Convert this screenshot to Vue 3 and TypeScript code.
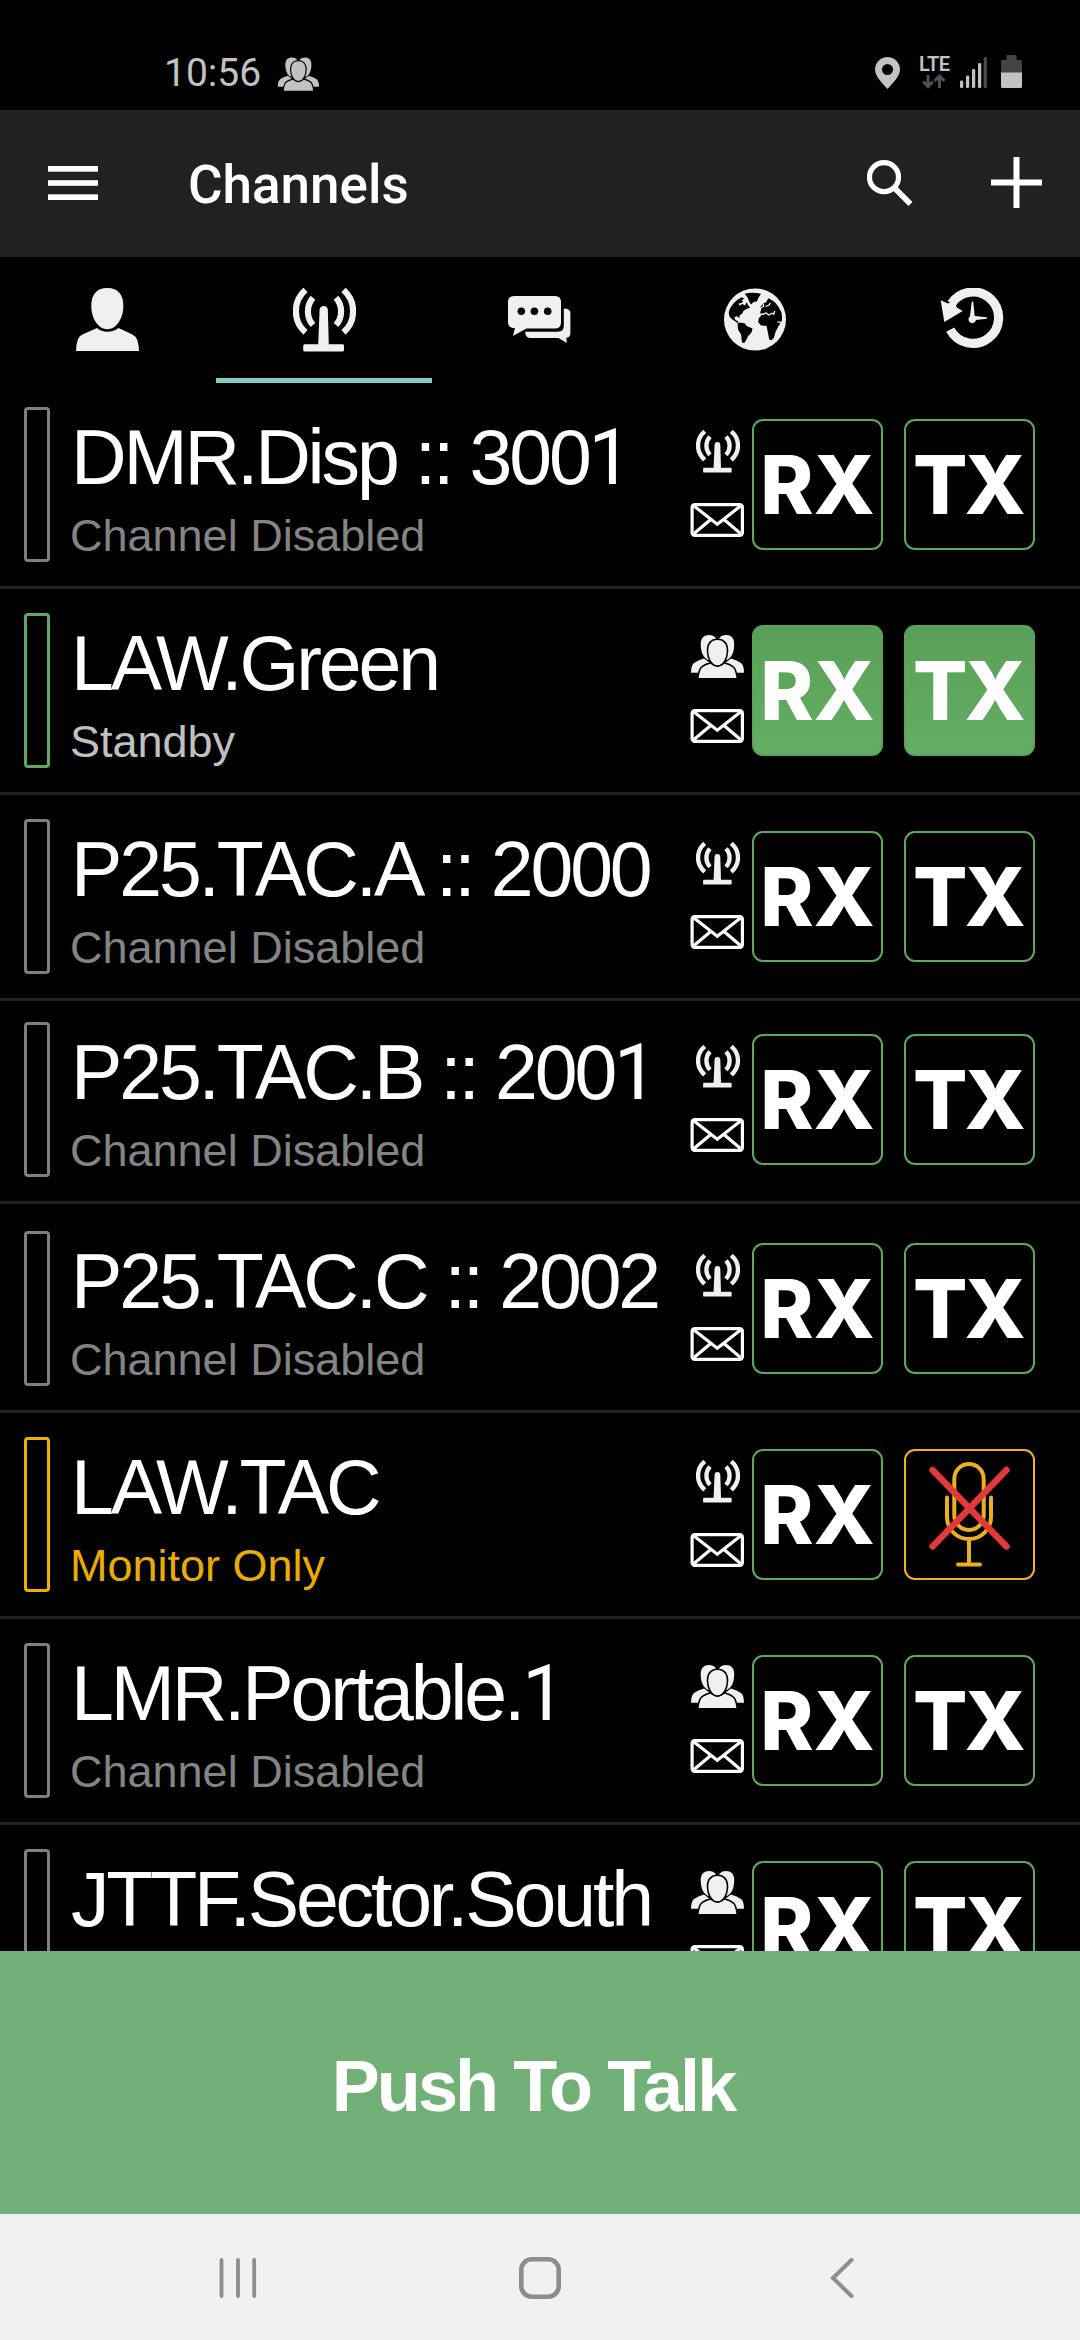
<script setup lang="ts">
type Kind = 'radio' | 'group'
type State = 'disabled' | 'standby' | 'monitor'

interface Channel {
  name: string
  status: string
  state: State
  kind: Kind
  shift?: 'tight' | 'loose'
}

const channels: Channel[] = [
  { name: 'DMR.Disp :: 3001', status: 'Channel Disabled', state: 'disabled', kind: 'radio' },
  { name: 'LAW.Green', status: 'Standby', state: 'standby', kind: 'group' },
  { name: 'P25.TAC.A :: 2000', status: 'Channel Disabled', state: 'disabled', kind: 'radio' },
  { name: 'P25.TAC.B :: 2001', status: 'Channel Disabled', state: 'disabled', kind: 'radio', shift: 'tight' },
  { name: 'P25.TAC.C :: 2002', status: 'Channel Disabled', state: 'disabled', kind: 'radio', shift: 'loose' },
  { name: 'LAW.TAC', status: 'Monitor Only', state: 'monitor', kind: 'radio' },
  { name: 'LMR.Portable.1', status: 'Channel Disabled', state: 'disabled', kind: 'group' },
  { name: 'JTTF.Sector.South', status: 'Channel Disabled', state: 'disabled', kind: 'group' },
]
</script>

<template>
  <div class="screen">
    <svg class="defs" width="0" height="0" aria-hidden="true">
      <symbol id="antenna" viewBox="0 0 63 64" preserveAspectRatio="none">
        <g fill="none" stroke="#f1eff0" stroke-width="6.2">
          <path d="M20 9.8A20.7 20.7 0 0 0 20 37" />
          <path d="M12.5 2A28.2 28.2 0 0 0 12.5 44.4" />
          <path d="M43 9.8A20.7 20.7 0 0 1 43 37" />
          <path d="M50.5 2A28.2 28.2 0 0 1 50.5 44.4" />
        </g>
        <path fill="#f1eff0" d="M26.6 21.5Q27 18 30.7 18T34.8 21.5L35.8 56.3H50Q51 56.3 51 58V62Q51 63.4 50 63.4H11.4Q10.2 63.4 10.2 62V58Q10.2 56.3 11.4 56.3H25.2Z" />
      </symbol>
      <symbol id="people" viewBox="0 0 54 44">
        <g fill="currentColor">
          <path d="M19 0C25 0 28 4 27 12C26 20 23 25 19 25C14 24 10.7 18 10.7 9C10.7 3 14 0 19 0Z" />
          <path d="M36 0C30 0 27 4 28 12C29 20 32 25 36 25C41 24 44.2 18 44.2 9C44.2 3 41 0 36 0Z" />
          <path d="M14 23.5L20 28L9 37.8H1C1 33 2 29.500 4 28Q8 25 14 23.500Z" />
          <path d="M41 23.500L35 28L46 37.800H54C54 33 53 29.500 51 28Q47 25 41 23.500Z" />
        </g>
        <g fill="currentColor" stroke="#000" stroke-width="3.200" paint-order="stroke">
          <path d="M20.500 28.800Q27.500 34 34.500 28.800Q43 31 44.500 35Q46 39 46.400 43H8.600Q9 39 10.500 35Q12 31 20.500 28.800Z" />
          <path d="M27.500 5C33.500 5 36.800 9 36.700 16C36.500 23 33 30.300 27.500 30.300S18.500 23 18.300 16C18.200 9 21.500 5 27.500 5Z" />
        </g>
      </symbol>
      <symbol id="envelope" viewBox="0 0 54 34">
        <g fill="none" stroke="#fff" stroke-width="3.200">
          <rect x="2.100" y="1.600" width="50.300" height="30.800" rx="2.600" />
          <path d="M4 3L27.300 21.300L50.500 3M20.700 16.500L4 30.500M34 16.500L50.500 30.500" />
        </g>
      </symbol>
    </svg>

    <header class="status-bar">
      <div class="status-left">
        <span class="clock">10:56</span>
        <svg class="status-people" width="42" height="35"><use href="#people" /></svg>
      </div>
      <div class="status-right">
        <svg class="pin" width="25" height="32" viewBox="0 0 25 32">
          <path fill="#c2c2c2" fill-rule="evenodd" d="M12.500 0A12.500 12.500 0 0 1 25 12.500C25 19 18 26 12.500 32C7 26 0 19 0 12.500A12.500 12.500 0 0 1 12.500 0ZM12.500 7A5.500 5.500 0 1 0 12.500 18A5.500 5.500 0 1 0 12.500 7Z" />
        </svg>
        <div class="lte">
          <span>LTE</span>
          <svg width="24" height="15" viewBox="0 0 24 15" fill="none" stroke="#505050" stroke-width="3">
            <path d="M6 1V12M1.200 7.500L6 12.500L10.800 7.500M17.500 14V2.500M12.500 7L17.500 2L22.500 7" />
          </svg>
        </div>
        <svg class="signal" width="28" height="31" viewBox="0 0 28 31">
          <g fill="#c2c2c2">
            <rect x="0" y="23.500" width="3.200" height="7.500" rx="1.200" />
            <rect x="6" y="18.500" width="3.200" height="12.500" rx="1.200" />
            <rect x="12" y="12" width="3.200" height="19" rx="1.200" />
            <rect x="18" y="6" width="3.200" height="25" rx="1.200" />
          </g>
          <rect x="23.700" y="0" width="3.200" height="31" rx="1.200" fill="#4a4a4a" />
        </svg>
        <svg class="battery" width="21" height="33" viewBox="0 0 21 33">
          <rect x="5.500" width="10" height="6" rx="1" fill="#444" />
          <path d="M1.500 5H19.500Q21 5 21 6.500V18H0V6.500Q0 5 1.500 5Z" fill="#444" />
          <path d="M0 17.500H21V31.500Q21 33 19.500 33H1.500Q0 33 0 31.500Z" fill="#c2c2c2" />
        </svg>
      </div>
    </header>

    <div class="app-bar">
      <svg class="menu" width="50" height="34" viewBox="0 0 50 34" fill="#fff">
        <rect width="50" height="5.700" /><rect y="14.200" width="50" height="5.600" /><rect y="28.300" width="50" height="5.700" />
      </svg>
      <h1>Channels</h1>
      <svg class="search" width="46" height="46" viewBox="0 0 46 46" fill="none" stroke="#fff">
        <circle cx="17" cy="17.200" r="14.500" stroke-width="5.200" />
        <path d="M28.500 29L43.500 44" stroke-width="5.600" />
      </svg>
      <svg class="plus" width="51" height="51" viewBox="0 0 51 51" stroke="#fff" stroke-width="6">
        <path d="M0 25.500H51M25.500 0V51" />
      </svg>
    </div>

    <nav class="tabs">
      <div class="tab">
        <svg width="64" height="64" viewBox="0 0 64 64" fill="#f1eff0">
          <path d="M31.300 0C42.500 0 47.300 7 47.300 18C47.300 31 40 41.200 31.300 41.200S15.300 31 15.300 18C15.300 7 20 0 31.300 0Z" />
          <path d="M21.100 40Q25 43.800 31.400 43.800T42.500 40L56 46.200Q60 48.300 61.300 52Q63 57 63 63H0Q0 57 1.700 52Q3 48 7 46.200Z" />
        </svg>
      </div>
      <div class="tab active">
        <svg width="63" height="64"><use href="#antenna" /></svg>
      </div>
      <div class="tab">
        <svg width="64" height="64" viewBox="0 0 64 64" fill="#f1eff0">
          <path d="M6 8H47Q53 8 53 14V34.500Q53 40.500 47 40.500H18.500L4.900 48L7 40.300Q0 40 0 34.500V14Q0 8 6 8Z" />
          <path d="M55.800 20.500Q62.400 20.500 62.400 25V45Q62.400 49.500 58.300 49.800L58.800 55L50.500 49.900H22Q17.200 49.800 17.200 43.700H50Q55.800 43.700 55.800 38Z" />
          <g fill="#000"><circle cx="13.300" cy="23.300" r="3.800" /><circle cx="26.400" cy="23.300" r="3.800" /><circle cx="39.700" cy="23.300" r="3.800" /></g>
        </svg>
      </div>
      <div class="tab">
        <svg width="64" height="64" viewBox="0 0 64 64">
          <circle cx="31" cy="31.500" r="31" fill="#f1eff0" />
          <g fill="#000">
            <path d="M20.700 5.700Q28 3.600 37 5.700L34.700 9.500L32.700 13.500L29.500 14L27 16.400L25.300 13.700L23.700 9.700Z" />
            <path d="M17.400 9.300Q8 14.500 5 23Q4 28 7.500 30.800L11.600 33.700L14.500 35.500L13.800 33L11.600 32.300L10.300 29.300L13 28.200L15.600 30.300L15.500 27.500L18.500 25.300L19.500 22.700L24 20.300L26.200 19.700L24 17L22.700 14.300L20.800 17.500L18.500 16L15.500 17.500L14.300 15.500L17.500 15L19.300 13L17.200 12.500L20.500 10.500Z" />
            <path d="M13.500 35.500L16 34.500L20.500 35.200L23 38.300L28.500 40.500L27.500 44.500L24.200 48L22.500 51.500L20.500 54.800L18.500 55L17.600 52L17.300 47L14 41.500Z" />
            <path d="M44.500 10.200Q53 14 57.300 24Q58.500 29 57.800 33L56.300 35.300L54.300 38.500L51.500 44L49.900 50L47.300 52.300L45.200 51.500L44 45.300L42.600 38L36.800 37.300L34.200 34L34.700 30.500L37 27.800L36.200 24.500L37.500 20.500L36.300 19L39.500 15L41.500 14.700Z" />
          </g>
          <g fill="none" stroke="#f1eff0" stroke-width="1.300">
            <path d="M36 26.500L40 26L42 24.700L44.500 27L48 25.200L49.800 26.300L50.800 23M41.500 18.500L45 17L46.500 15M37 19.500L39.500 18.500V15.500M53.500 34.200H57" />
          </g>
        </svg>
      </div>
      <div class="tab">
        <svg width="64" height="64" viewBox="0 0 64 64">
          <path d="M10.200 41.700A25.700 25.700 0 1 0 11.500 15.500" fill="none" stroke="#f1eff0" stroke-width="9.200" />
          <path d="M.7 12.300L8 15.500L15 12L16.500 19.300L22.700 23L4.300 34Z" fill="#f1eff0" />
          <path d="M31.700 14.200Q32.500 12.500 33.300 14.200L34.700 28L46.500 29.200Q48.200 30 46.500 30.800L36 32A3.800 3.800 0 1 1 30 28.200Z" fill="#f1eff0" />
        </svg>
      </div>
    </nav>

    <main class="list">
      <article v-for="c in channels" :key="c.name" class="row" :class="[c.state, c.shift]">
        <div class="level"></div>
        <div class="label">
          <div class="name"><template v-for="(ch, i) in c.name.split(/(1)/)" :key="i"><span v-if="ch === '1'" class="one">1</span><template v-else>{{ ch }}</template></template></div>
          <div class="status">{{ c.status }}</div>
        </div>
        <div class="marks">
          <svg v-if="c.kind === 'radio'" class="mark-radio" width="44" height="43"><use href="#antenna" /></svg>
          <svg v-else class="mark-group" width="54" height="44"><use href="#people" /></svg>
          <svg class="mark-mail" width="54" height="34"><use href="#envelope" /></svg>
        </div>
        <div class="box"><span>RX</span></div>
        <div class="box tx">
          <svg v-if="c.state === 'monitor'" width="127" height="127" viewBox="2 2 127 127" fill="none" stroke="#edb01d" stroke-width="4" stroke-linecap="round">
            <rect x="50.300" y="15" width="29.400" height="66" rx="14.700" />
            <path d="M43 48.500V68A22 22 0 0 0 87 68V48.500M65 90V115.500M54 115.500H76" />
            <path d="M28.500 21L102.500 97.500M102.500 21L28.500 97.500" stroke="#e23a38" stroke-width="6.500" />
          </svg>
          <span v-else>TX</span>
        </div>
      </article>
    </main>

    <button class="ptt">Push To Talk</button>

    <footer class="nav">
      <div>
        <svg width="38" height="40" viewBox="0 0 38 40" stroke="#8d8d8d" stroke-width="3.800" stroke-linecap="round"><path d="M2.500 2V38M19 2V38M35.200 2V38" /></svg>
      </div>
      <div>
        <svg width="42" height="42" viewBox="0 0 42 42" fill="none" stroke="#8d8d8d" stroke-width="4.600"><rect x="2.300" y="2.300" width="37.400" height="37.400" rx="10.500" /></svg>
      </div>
      <div>
        <svg width="24" height="40" viewBox="0 0 24 40" fill="none" stroke="#8d8d8d" stroke-width="4" stroke-linecap="round"><path d="M21.500 2L3 20L21.500 38" /></svg>
      </div>
    </footer>
  </div>
</template>

<style>
body {
  background: #000;
}
</style>

<style scoped>
.screen {
  width: 1080px;
  height: 2340px;
  display: flex;
  flex-direction: column;
  overflow: hidden;
  background: #000;
  color: #fff;
  font-family: "Liberation Sans", Arial, sans-serif;
}
.screen > * {
  flex-shrink: 0;
}
svg {
  display: block;
}
.defs {
  position: absolute;
}
.status-bar {
  height: 110px;
  box-sizing: border-box;
  padding: 55px 58px 0 164px;
  display: flex;
  justify-content: space-between;
  align-items: flex-start;
}
.status-left,
.status-right {
  display: flex;
  align-items: flex-start;
}
.clock {
  width: 113px;
  font: 400 39px/37px Roboto, sans-serif;
  color: #c2c2c2;
}
.status-people {
  margin-top: 2px;
  color: #c2c2c2;
}
.pin {
  margin: 2px 19px 0 0;
}
.lte {
  display: flex;
  flex-direction: column;
  width: 41px;
  padding-top: 1px;
}
.lte span {
  font: 600 20px/16px Roboto, sans-serif;
  letter-spacing: -0.5px;
  color: #c2c2c2;
}
.lte svg {
  margin: 2px 0 0 3px;
}
.signal {
  margin: 2px 13px 0 0;
}
.app-bar {
  height: 147px;
  background: #212121;
  display: flex;
  align-items: flex-start;
}
.menu {
  margin: 56px 0 0 48px;
}
h1 {
  margin: 43px 0 0 90px;
  flex: 1;
  font: 500 53px/64px Roboto, sans-serif;
}
.search {
  margin-top: 50px;
}
.plus {
  margin: 47px 38px 0 78px;
}
.tabs {
  height: 126px;
  display: flex;
}
.tab {
  width: 216px;
  box-sizing: border-box;
  padding-top: 31px;
  display: flex;
  justify-content: center;
  align-items: flex-start;
}
.tab.active {
  border-bottom: 5px solid #80cbc4;
}
.list {
  height: 1568px;
  overflow: hidden;
}
.row {
  height: 206px;
  box-sizing: border-box;
  border-bottom: 3px solid #212121;
  padding: 24px 45px 0 24px;
  display: flex;
  align-items: flex-start;
}
.row.tight {
  height: 203px;
  padding-top: 21px;
}
.row.loose {
  height: 209px;
  padding-top: 27px;
}
.level {
  width: 26px;
  height: 155px;
  box-sizing: border-box;
  border: 3px solid #7e807e;
  border-radius: 4px;
}
.standby .level {
  border-color: #60a860;
}
.monitor .level {
  border-color: #f0b000;
}
.label {
  flex: 1;
  min-width: 0;
  margin: 11px 0 0 20px;
  white-space: nowrap;
}
.name {
  padding-left: 1px;
  font-size: 77px;
  line-height: 78px;
  height: 78px;
  letter-spacing: -3.150px;
}
.one {
  font-family: Roboto, sans-serif;
  line-height: 1;
}
.status {
  margin-top: 15px;
  font-size: 45px;
  line-height: 50px;
  color: #848484;
}
.standby .status {
  color: #c0c0c0;
}
.monitor .status {
  color: #eaac00;
}
.marks {
  width: 54px;
  margin: 22px 8px 0 0;
  display: flex;
  flex-direction: column;
  align-items: center;
  color: #f1eff0;
}
.mark-radio {
  margin: 1px 0 0 1px;
}
.mark-mail {
  margin-top: 30px;
}
.box {
  width: 131px;
  height: 131px;
  margin-top: 12px;
  box-sizing: border-box;
  border: 2px solid #5ea85e;
  border-radius: 11px;
  display: flex;
  align-items: center;
  justify-content: center;
  font: 800 80.500px/127px Inter, sans-serif;
}
.box.tx {
  margin-left: 21px;
  letter-spacing: -3px;
}
.box.tx span {
  padding-right: 3px;
}
.standby .box {
  background: linear-gradient(#5a9f58, #63ae64);
  border-color: #5ba35b;
}
.monitor .tx {
  border-color: #f0b020;
}
.ptt {
  height: 263px;
  border: 0;
  padding: 6px 14px 0 0;
  background: #71b177;
  color: #fff;
  font: 700 72px/80px "Liberation Sans", Arial, sans-serif;
  letter-spacing: -2.900px;
}
.nav {
  height: 126px;
  background: #f1f1f1;
  display: flex;
  align-items: center;
  justify-content: center;
}
.nav div {
  width: 302px;
  display: flex;
  justify-content: center;
  padding-top: 2px;
}
</style>
